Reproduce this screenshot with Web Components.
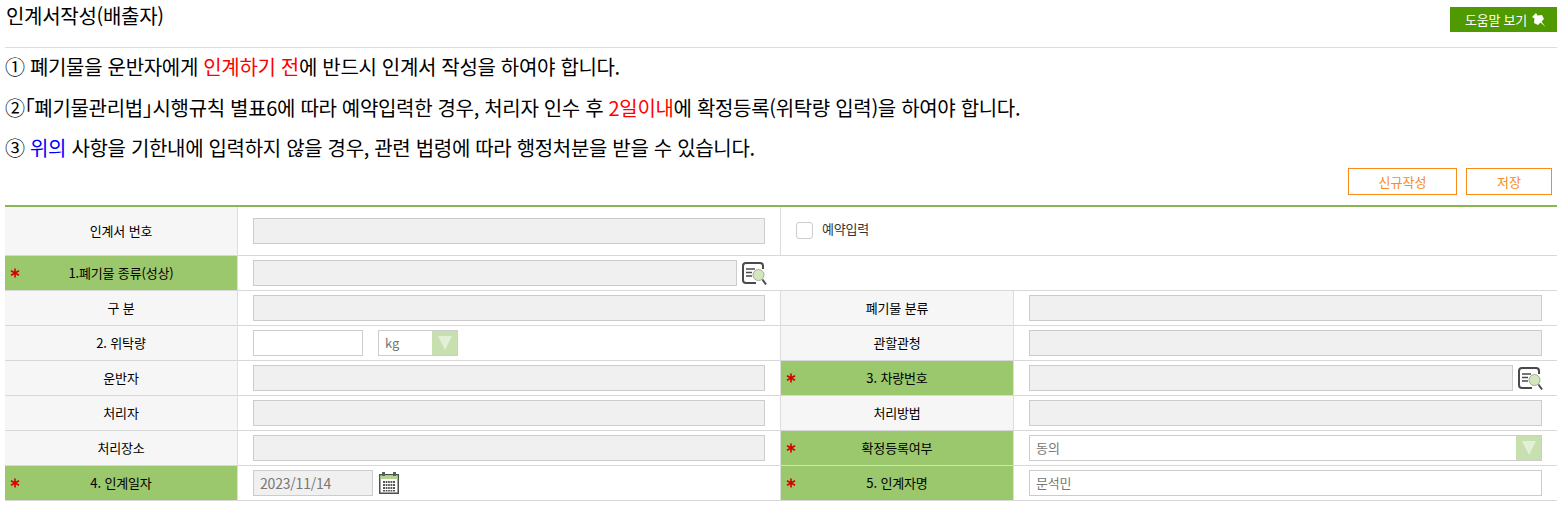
<!DOCTYPE html>
<html lang="ko">
<head>
<meta charset="utf-8">
<title>인계서작성(배출자)</title>
<style>
body { margin: 0; background: #fff; font-family: "Noto Sans CJK KR", "Noto Sans", sans-serif; color: #000; }
</style>
</head>
<body>
<handover-page>
  <page-header slot="header" title-text="인계서작성(배출자)"></page-header>
  <notice-list slot="notices">
    <notice-line>① 폐기물을 운반자에게 <mark-text color="#f00">인계하기 전</mark-text>에 반드시 인계서 작성을 하여야 합니다.</notice-line>
    <notice-line>②｢폐기물관리법｣시행규칙 별표6에 따라 예약입력한 경우, 처리자 인수 후 <mark-text color="#f00">2일이내</mark-text>에 확정등록(위탁량 입력)을 하여야 합니다.</notice-line>
    <notice-line>③ <mark-text color="#00f">위의</mark-text> 사항을 기한내에 입력하지 않을 경우, 관련 법령에 따라 행정처분을 받을 수 있습니다.</notice-line>
  </notice-list>
  <action-bar slot="actions">
    <outline-button style="width:109px">신규작성</outline-button>
    <outline-button style="width:86px">저장</outline-button>
  </action-bar>
  <form-grid slot="form">
    <field-label>인계서 번호</field-label>
    <field-cell><text-box width="512" disabled></text-box></field-cell>
    <field-cell span="2"><check-field>예약입력</check-field></field-cell>

    <field-label required>1.폐기물 종류(성상)</field-label>
    <field-cell span="3"><text-box width="484" disabled></text-box><search-icon></search-icon></field-cell>

    <field-label>구 분</field-label>
    <field-cell><text-box width="512" disabled></text-box></field-cell>
    <field-label>폐기물 분류</field-label>
    <field-cell last><text-box width="513" disabled></text-box></field-cell>

    <field-label>2. 위탁량</field-label>
    <field-cell><text-box width="110"></text-box><select-box width="80" value="kg" style="margin-left:15px"></select-box></field-cell>
    <field-label>관할관청</field-label>
    <field-cell last><text-box width="513" disabled></text-box></field-cell>

    <field-label>운반자</field-label>
    <field-cell><text-box width="512" disabled></text-box></field-cell>
    <field-label required>3. 차량번호</field-label>
    <field-cell last><text-box width="484" disabled></text-box><search-icon></search-icon></field-cell>

    <field-label>처리자</field-label>
    <field-cell><text-box width="512" disabled></text-box></field-cell>
    <field-label>처리방법</field-label>
    <field-cell last><text-box width="513" disabled></text-box></field-cell>

    <field-label>처리장소</field-label>
    <field-cell><text-box width="512" disabled></text-box></field-cell>
    <field-label required>확정등록여부</field-label>
    <field-cell last><select-box width="513" value="동의"></select-box></field-cell>

    <field-label required>4. 인계일자</field-label>
    <field-cell><text-box width="120" disabled value="2023/11/14" style="font-size:14px"></text-box><calendar-icon></calendar-icon></field-cell>
    <field-label required>5. 인계자명</field-label>
    <field-cell last><text-box width="513" value="문석민"></text-box></field-cell>
  </form-grid>
</handover-page>

<script>
function define(name, css, html, extra) {
  class Component extends HTMLElement {
    constructor() {
      super();
      this.attachShadow({ mode: "open" });
      this.shadowRoot.innerHTML = `<style>${css}</style>${html}`;
    }
    connectedCallback() {
      if (extra) extra(this);
    }
  }
  customElements.define(name, Component);
}

define("handover-page", `
  :host { display: block; padding: 0 9px 0 5px; }
`, `
  <slot name="header"></slot>
  <slot name="notices"></slot>
  <slot name="actions"></slot>
  <slot name="form"></slot>
`);

define("page-header", `
  :host { display: flex; justify-content: space-between; height: 47px; border-bottom: 1px solid #ddd; }
  h1 { margin: 0; padding-left: 1px; font-size: 20px; font-weight: 400; line-height: 31px; letter-spacing: -0.3px; }
  a { display: flex; align-items: center; gap: 4px; box-sizing: border-box; width: 107px; height: 25px; margin-top: 7px; padding-left: 15px;
      background: #4e9a00; color: #fff; font-size: 13px; letter-spacing: -0.25px; }
  svg { width: 16px; height: 16px; }
`, `
  <h1></h1>
  <a>도움말 보기
    <svg viewBox="0 0 16 16"><path fill="#fff" d="M5 1 L1 5 L3.500 6.500 L3 11 L7 13 L9.500 10.500 L14.500 15 L10.500 9.500 L13 7 L11 3 L6.500 3.500 Z"/></svg>
  </a>
`, (el) => {
  el.shadowRoot.querySelector("h1").textContent = el.getAttribute("title-text");
});

define("notice-list", `
  :host { display: block; }
`, `<slot></slot>`);

define("notice-line", `
  :host { display: block; height: 40.5px; line-height: 37px; font-size: 20px; letter-spacing: -0.32px; white-space: nowrap; color: #000; }
`, `<slot></slot>`);

define("mark-text", `
  :host { display: inline; }
`, `<slot></slot>`, (el) => {
  el.style.color = el.getAttribute("color");
});

define("action-bar", `
  :host { display: flex; justify-content: flex-end; gap: 9px; padding: 0 5px 10px 0; margin-top: -2px; }
`, `<slot></slot>`);

define("outline-button", `
  :host { display: flex; align-items: center; justify-content: center; box-sizing: border-box; height: 27px;
          border: 1px solid #f98a1c; color: #f98a1c; font-size: 13px; background: #fff; }
`, `<slot></slot>`);

define("form-grid", `
  :host { display: grid; grid-template-columns: 233px 543px 233px 543px; grid-template-rows: 49px repeat(7, 35px); border-top: 2px solid #8ab552; }
`, `<slot></slot>`);

define("field-label", `
  :host { position: relative; display: flex; align-items: center; justify-content: center; box-sizing: border-box;
          background: #f6f6f6; border-right: 1px solid #ddd; border-bottom: 1px solid #d8d8d8; font-size: 13px; letter-spacing: -0.15px; color: #000; }
  :host([required]) { background: #9bc76d; }
  i { display: none; position: absolute; left: 5px; top: 12px; width: 10px; height: 10px; }
  :host([required]) i { display: block; }
  svg { display: block; width: 10px; height: 10px; }
`, `
  <i><svg viewBox="0 0 10 10"><path stroke="#d40000" stroke-width="1.6" d="M5 0.5 V9.5 M1 2.700 L9 7.300 M9 2.700 L1 7.300"/></svg></i>
  <slot></slot>
`);

define("field-cell", `
  :host { display: flex; align-items: center; box-sizing: border-box; padding-left: 15px;
          border-right: 1px solid #ddd; border-bottom: 1px solid #d8d8d8; background: #fff; }
  :host([last]), :host([span="3"]), :host([span="2"]) { border-right: 0; }
  :host([span="2"]) { grid-column: span 2; }
  :host([span="3"]) { grid-column: span 3; }
`, `<slot></slot>`);

define("text-box", `
  :host { display: block; box-sizing: border-box; height: 26px; border: 1px solid #ccc; background: #fff;
          padding: 0 6px; line-height: 24px; font-size: 13px; letter-spacing: -0.2px; color: #777; }
  :host([disabled]) { background: #f0f0f0; }
`, `<span></span>`, (el) => {
  el.style.width = el.getAttribute("width") + "px";
  el.shadowRoot.querySelector("span").textContent = el.getAttribute("value") || "";
});

define("select-box", `
  :host { display: flex; justify-content: space-between; box-sizing: border-box; height: 26px; border: 1px solid #ccc; background: #fff;
          padding-left: 6px; line-height: 24px; font-size: 13px; color: #777; }
  i { display: flex; align-items: center; justify-content: center; width: 25px; height: 24px; background: #c8dfb0; }
  svg { width: 18px; height: 16px; }
`, `
  <span></span>
  <i><svg viewBox="0 0 18 16"><path fill="#e3efd7" d="M2 1 H16 L9 15 Z"/></svg></i>
`, (el) => {
  el.style.width = el.getAttribute("width") + "px";
  el.shadowRoot.querySelector("span").textContent = el.getAttribute("value") || "";
});

define("search-icon", `
  :host { display: block; width: 25px; height: 24px; margin-left: 5px; }
  svg { display: block; overflow: visible; }
`, `
  <svg width="25" height="25" viewBox="0 0 25 25" fill="none">
    <path stroke="#4a4a4a" stroke-width="2" d="M14 22 H4 Q1 22 1 19 V5 Q1 2 4 2 H18 Q21 2 21 5 V8"/>
    <path stroke="#4a4a4a" stroke-width="1.500" d="M4 8 H13 M4 11.500 H10 M4 15 H10"/>
    <circle cx="16.500" cy="14" r="5.500" fill="#d3e6bd" stroke="#a3ad9e"/>
    <path stroke="#4a4a4a" stroke-width="2" d="M20.500 18.500 L24 23.500"/>
  </svg>
`);

define("calendar-icon", `
  :host { display: block; width: 22px; height: 24px; margin-left: 5px; }
  svg { display: block; }
`, `
  <svg width="22" height="24" viewBox="0 0 22 24">
    <rect x="1.750" y="3.750" width="18.500" height="18.500" fill="#fff" stroke="#4a4f4f" stroke-width="1.500"/>
    <rect x="2.500" y="4.500" width="17" height="3.500" fill="#b3d48f"/>
    <rect x="4" y="1" width="3" height="4" fill="#5a5f5a"/>
    <rect x="15" y="1" width="3" height="4" fill="#5a5f5a"/>
    <g fill="#555">
      <rect x="5" y="10" width="12" height="2"/><rect x="5" y="13" width="12" height="2"/><rect x="5" y="16" width="12" height="2"/><rect x="5" y="19" width="12" height="1.500"/>
    </g>
    <g fill="#fff">
      <rect x="7" y="10" width=".7" height="11"/><rect x="9.400" y="10" width=".7" height="11"/><rect x="11.800" y="10" width=".7" height="11"/><rect x="14.200" y="10" width=".7" height="11"/>
    </g>
  </svg>
`);

define("check-field", `
  :host { display: flex; align-items: center; gap: 9px; font-size: 13px; letter-spacing: -0.2px; color: #333; }
  i { display: block; box-sizing: border-box; width: 17px; height: 17px; border: 1px solid #ccc; border-radius: 3px; background: #fff; }
  span { margin-top: -4px; }
`, `<i></i><span><slot></slot></span>`);
</script>
</body>
</html>
